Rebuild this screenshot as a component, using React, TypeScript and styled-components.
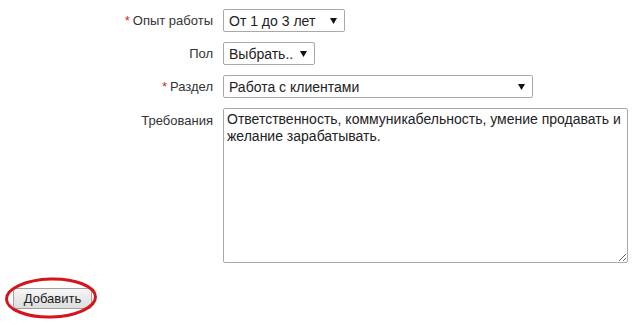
import styled, { createGlobalStyle } from 'styled-components';

const GlobalStyle = createGlobalStyle`
  body {
    margin: 0;
    background: #fff;
    font-family: 'Liberation Sans', Arial, sans-serif;
  }
`;

const Page = styled.div`
  width: 644px;
  height: 325px;
  padding-top: 9px;
  box-sizing: border-box;
  display: flex;
  flex-direction: column;
`;

const Form = styled.div`
  display: flex;
  flex-direction: column;
  gap: 10px;
`;

const Row = styled.div<{ $top?: boolean }>`
  display: flex;
  align-items: ${p => (p.$top ? 'flex-start' : 'center')};
  gap: 10px;
`;

const Label = styled.label<{ $top?: boolean }>`
  width: 213px;
  text-align: right;
  font-size: 13px;
  color: #333;
  padding-top: ${p => (p.$top ? '5px' : '0')};
`;

const Star = styled.span`
  color: #d9232d;
  margin-right: 3px;
`;

const SelectBox = styled.div<{ $w: number }>`
  position: relative;
  width: ${p => p.$w}px;
  height: 23px;
`;

const Select = styled.select`
  appearance: none;
  width: 100%;
  height: 100%;
  box-sizing: border-box;
  border: 1px solid #a9a9a9;
  border-radius: 2px;
  background: #fff;
  padding: 0 20px 0 5px;
  font-family: 'Liberation Sans', Arial, sans-serif;
  font-size: 14px;
  color: #222;
  outline: none;
`;

const Arrow = styled.svg`
  position: absolute;
  right: 8px;
  top: 9px;
  pointer-events: none;
`;

const TextArea = styled.textarea`
  width: 405px;
  height: 155px;
  box-sizing: border-box;
  border: 1px solid #a9a9a9;
  border-radius: 2px;
  padding: 2px 3px;
  font-family: 'Liberation Sans', Arial, sans-serif;
  font-size: 14px;
  line-height: 17px;
  color: #222;
  resize: both;
  outline: none;
`;

const ButtonRow = styled.div`
  margin-top: 25px;
  padding-left: 13px;
`;

const ButtonWrap = styled.div`
  position: relative;
  display: inline-block;
`;

const Button = styled.button`
  width: 79px;
  height: 21px;
  border: 1px solid #a0a0a0;
  border-radius: 3px;
  background: linear-gradient(#f6f6f6, #dddddd);
  font-family: 'Liberation Sans', Arial, sans-serif;
  font-size: 13px;
  color: #222;
  padding: 0;
`;

const Circle = styled.svg`
  position: absolute;
  left: -9px;
  top: -13px;
  pointer-events: none;
`;

function SelectField({ w, value, options }: { w: number; value: string; options: string[] }) {
  return (
    <SelectBox $w={w}>
      <Select defaultValue={value}>
        {options.map(o => (
          <option key={o}>{o}</option>
        ))}
      </Select>
      <Arrow width="7" height="6" viewBox="0 0 7 6">
        <path d="M0 0 H7 L3.5 6 Z" fill="#111" />
      </Arrow>
    </SelectBox>
  );
}

export default function App() {
  return (
    <Page>
      <GlobalStyle />
      <Form>
        <Row>
          <Label><Star>*</Star>Опыт работы</Label>
          <SelectField w={122} value="От 1 до 3 лет" options={['От 1 до 3 лет', 'Без опыта', 'От 3 до 6 лет']} />
        </Row>
        <Row>
          <Label>Пол</Label>
          <SelectField w={92} value="Выбрать.." options={['Выбрать..', 'Мужской', 'Женский']} />
        </Row>
        <Row>
          <Label><Star>*</Star>Раздел</Label>
          <SelectField w={310} value="Работа с клиентами" options={['Работа с клиентами', 'Продажи']} />
        </Row>
        <Row $top>
          <Label $top>Требования</Label>
          <TextArea defaultValue="Ответственность, коммуникабельность, умение продавать и желание зарабатывать." />
        </Row>
      </Form>
      <ButtonRow>
        <ButtonWrap>
          <Button>Добавить</Button>
          <Circle width="96" height="46" viewBox="0 0 96 46">
            <ellipse cx="47" cy="23" rx="44.5" ry="19" fill="none" stroke="#d7141c" strokeWidth="3" transform="rotate(-1.5 47 23)" />
          </Circle>
        </ButtonWrap>
      </ButtonRow>
    </Page>
  );
}
